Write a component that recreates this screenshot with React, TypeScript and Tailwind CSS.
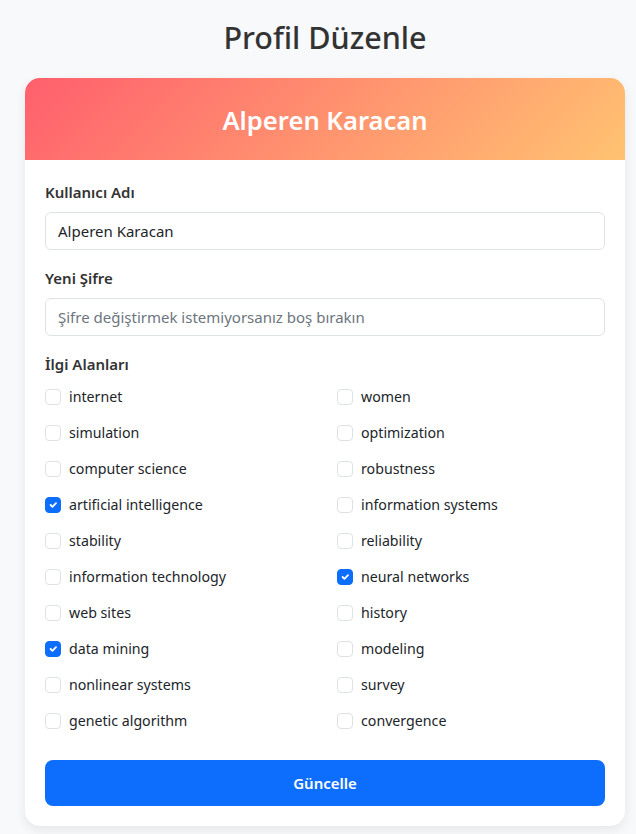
import { useState } from "react";

const interests: { name: string; checked: boolean }[] = [
	{ name: "internet", checked: false },
	{ name: "women", checked: false },
	{ name: "simulation", checked: false },
	{ name: "optimization", checked: false },
	{ name: "computer science", checked: false },
	{ name: "robustness", checked: false },
	{ name: "artificial intelligence", checked: true },
	{ name: "information systems", checked: false },
	{ name: "stability", checked: false },
	{ name: "reliability", checked: false },
	{ name: "information technology", checked: false },
	{ name: "neural networks", checked: true },
	{ name: "web sites", checked: false },
	{ name: "history", checked: false },
	{ name: "data mining", checked: true },
	{ name: "modeling", checked: false },
	{ name: "nonlinear systems", checked: false },
	{ name: "survey", checked: false },
	{ name: "genetic algorithm", checked: false },
	{ name: "convergence", checked: false },
];

function CheckItem({
	label,
	checked,
	onToggle,
}: {
	label: string;
	checked: boolean;
	onToggle: () => void;
}) {
	return (
		<label className="flex items-center h-[36px] cursor-pointer">
			<span
				onClick={onToggle}
				className={`w-4 h-4 rounded-[4px] border flex items-center justify-center shrink-0 ${
					checked ? "bg-[#0d6efd] border-[#0d6efd]" : "bg-white border-[#dee2e6]"
				}`}
			>
				{checked && (
					<svg width="12" height="12" viewBox="0 0 20 20">
						<path
							d="M6 10l3 3l6-6"
							fill="none"
							stroke="#fff"
							strokeWidth="3"
							strokeLinecap="round"
							strokeLinejoin="round"
						/>
					</svg>
				)}
			</span>
			<span className="ml-2 text-[14.2px] text-[#212529]">{label}</span>
		</label>
	);
}

export default function App() {
	const [username, setUsername] = useState("Alperen Karacan");
	const [password, setPassword] = useState("");
	const [selected, setSelected] = useState(interests.map((i) => i.checked));

	const toggle = (idx: number) =>
		setSelected((s) => s.map((v, i) => (i === idx ? !v : v)));

	return (
		<div
			className="h-[834px] overflow-hidden bg-[#f8f9fa] pl-[25px] pt-[18px] text-[#212529]"
			style={{ fontFamily: '"Noto Sans", "Liberation Sans", sans-serif' }}
		>
			<div className="w-[600px]">
				<h2 className="text-center text-[30.5px] leading-[38px] font-medium text-[#333] mb-[22px]">
					Profil Düzenle
				</h2>

				<div className="bg-white rounded-[15px] shadow-[0_4px_12px_rgba(0,0,0,0.08)] overflow-hidden">
					<div className="h-[82px] pt-1 flex items-center justify-center bg-[linear-gradient(135deg,#ff5f6d,#ffc371)]">
						<h3 className="text-white text-[25.6px] font-semibold">Alperen Karacan</h3>
					</div>

					<form className="p-5" onSubmit={(e) => e.preventDefault()}>
						<div className="mb-[16px]">
							<label className="block text-[15px] font-semibold text-[#333] mb-[8px] leading-[24px]">
								Kullanıcı Adı
							</label>
							<input
								value={username}
								onChange={(e) => setUsername(e.target.value)}
								className="w-full h-[38px] px-3 border border-[#dee2e6] rounded-[6px] text-[15px] text-[#212529] outline-none"
							/>
						</div>

						<div className="mb-[16px]">
							<label className="block text-[15px] font-semibold text-[#333] mb-[8px] leading-[24px]">
								Yeni Şifre
							</label>
							<input
								type="password"
								value={password}
								onChange={(e) => setPassword(e.target.value)}
								placeholder="Şifre değiştirmek istemiyorsanız boş bırakın"
								className="w-full h-[38px] px-3 border border-[#dee2e6] rounded-[6px] text-[15px] text-[#212529] placeholder:text-[#6c757d] outline-none"
							/>
						</div>

						<div className="mb-[21px]">
							<label className="block text-[15px] font-semibold text-[#333] leading-[24px] mb-[3px]">
								İlgi Alanları
							</label>
							<div className="grid grid-cols-2 gap-x-6">
								{interests.map((it, idx) => (
									<CheckItem
										key={it.name}
										label={it.name}
										checked={selected[idx]}
										onToggle={() => toggle(idx)}
									/>
								))}
							</div>
						</div>

						<button
							type="submit"
							className="w-full h-[46px] rounded-[8px] bg-[#0d6efd] text-white text-[15px] font-semibold"
						>
							Güncelle
						</button>
					</form>
				</div>
			</div>
		</div>
	);
}
